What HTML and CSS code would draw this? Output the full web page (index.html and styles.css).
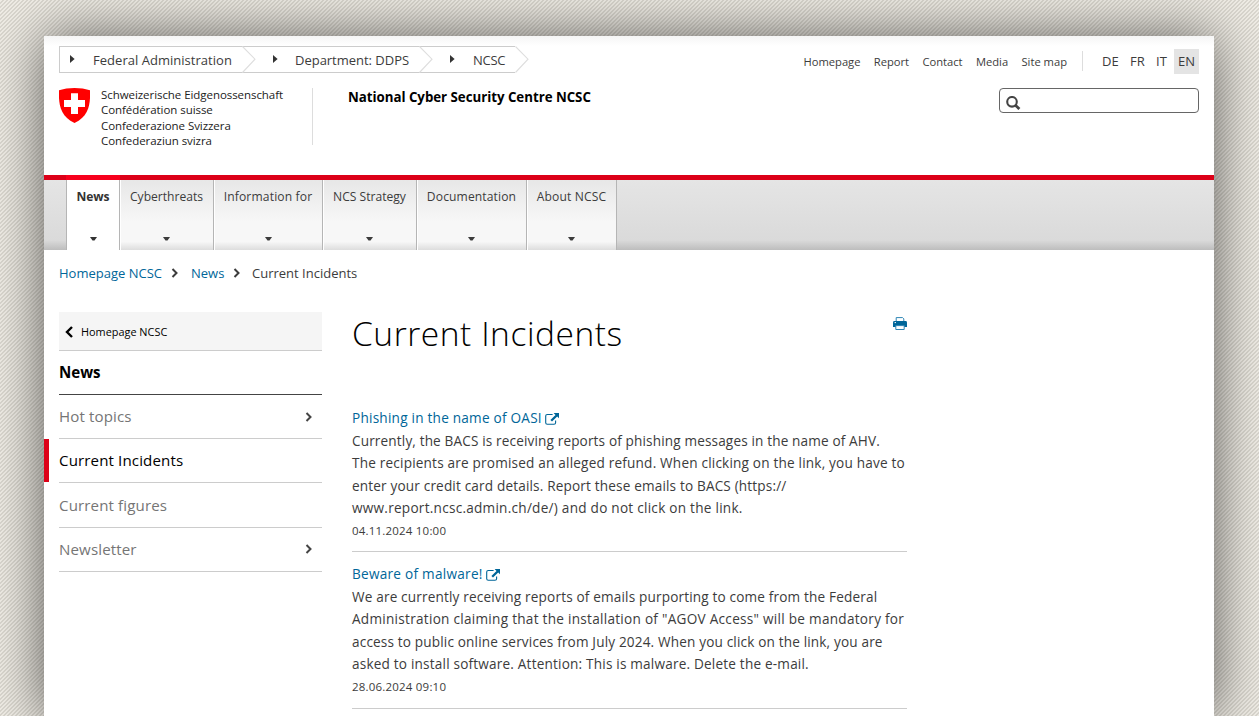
FILE: index.html
```html
<!DOCTYPE html>
<html lang="en">
<head>
<meta charset="utf-8">
<title>Current Incidents</title>
<link rel="stylesheet" href="styles.css">
</head>
<body>
<svg width="0" height="0" class="defs">
  <symbol id="chev" viewBox="0 0 8 10"><path d="M1.5 1 L5.5 5 L1.5 9" fill="none" stroke="currentColor" stroke-width="2"/></symbol>
  <symbol id="tri" viewBox="0 0 5 8"><path d="M0 0 L4.6 4 L0 8Z" fill="currentColor"/></symbol>
  <symbol id="caret" viewBox="0 0 7 4"><path d="M0 0 H7 L4.5 3.6 H2.5Z" fill="currentColor"/></symbol>
  <symbol id="ext" viewBox="0 0 14 12"><path d="M7.6 1.5 H2.3 Q.7 1.5 .7 3 V9.8 Q.7 11.3 2.3 11.3 H9 Q10.6 11.3 10.6 9.8 V7.4" fill="none" stroke="currentColor" stroke-width="1.1"/><path d="M8.6 0 H14 V5.2 L12.2 3.5 L7 8.6 L5.4 7 L10.5 1.9Z" fill="currentColor"/></symbol>
  <symbol id="arrow" viewBox="0 0 14 27"><path d="M.5 .5 L13 13.2 L.5 26.5" fill="#fff" stroke="#dedede" stroke-width="1.1"/></symbol>
</svg>
<div class="page">
  <header class="header">
    <div class="top">
      <ol class="levels">
        <li class="level l1"><svg class="tri"><use href="#tri"/></svg><span>Federal Administration</span><svg class="arrow"><use href="#arrow"/></svg></li>
        <li class="level l2"><svg class="tri"><use href="#tri"/></svg><span>Department: DDPS</span><svg class="arrow"><use href="#arrow"/></svg></li>
        <li class="level l3"><svg class="tri"><use href="#tri"/></svg><span>NCSC</span><svg class="arrow"><use href="#arrow"/></svg></li>
      </ol>
      <nav class="service"><a>Homepage</a><a>Report</a><a>Contact</a><a>Media</a><a>Site map</a></nav>
      <nav class="langs"><a class="g1">DE</a><a class="g2">FR</a><a class="g3">IT</a><a class="on">EN</a></nav>
    </div>
    <div class="brand">
      <div class="logo">
        <svg class="shield" viewBox="0 0 31 35"><path d="M0 2.2 Q7 0 15.5 0 Q24 0 31 2.2 C31.4 14 31 28 15.5 35 C0 28 -.4 14 0 2.2Z" fill="#f00"/><path d="M12 5.2 H19 V12 H26 V19 H19 V26 H12 V19 H5 V12 H12Z" fill="#fff"/></svg>
        <div class="names"><div>Schweizerische Eidgenossenschaft</div><div>Confédération suisse</div><div>Confederazione Svizzera</div><div>Confederaziun svizra</div></div>
      </div>
      <div class="office">National Cyber Security Centre NCSC</div>
      <div class="search"><svg viewBox="0 0 15 14"><circle cx="6" cy="5.8" r="4.8" fill="none" stroke="#444" stroke-width="2.1"/><path d="M9.4 9.2 L13.4 13" stroke="#444" stroke-width="2.8"/></svg></div>
    </div>
  </header>
  <nav class="nav">
    <a class="tab t1 on"><span>News</span><svg><use href="#caret"/></svg></a>
    <a class="tab t2"><span>Cyberthreats</span><svg><use href="#caret"/></svg></a>
    <a class="tab t3"><span>Information for</span><svg><use href="#caret"/></svg></a>
    <a class="tab t4"><span>NCS Strategy</span><svg><use href="#caret"/></svg></a>
    <a class="tab t5"><span>Documentation</span><svg><use href="#caret"/></svg></a>
    <a class="tab t6"><span>About NCSC</span><svg><use href="#caret"/></svg></a>
  </nav>
  <div class="crumbs"><a class="c1">Homepage NCSC</a><svg><use href="#chev"/></svg><a class="c2">News</a><svg><use href="#chev"/></svg><span class="c3">Current Incidents</span></div>
  <div class="main">
    <aside class="side">
      <a class="back"><svg viewBox="0 0 8 12"><path d="M7 1 L2 6 L7 11" fill="none" stroke="#000" stroke-width="2.4"/></svg>Homepage NCSC</a>
      <a class="item head">News</a>
      <a class="item"><span>Hot topics</span><svg><use href="#chev"/></svg></a>
      <a class="item current">Current Incidents</a>
      <a class="item low">Current figures</a>
      <a class="item low"><span>Newsletter</span><svg><use href="#chev"/></svg></a>
    </aside>
    <main class="content">
      <div class="titlebar">
        <h1>Current Incidents</h1>
        <svg class="print" viewBox="0 0 14 13"><path d="M3.2 5 V.6 H9.6 L10.8 1.8 V5" fill="#fff" stroke="#2f86b5" stroke-width="1"/><path d="M1.4 4 H12.6 Q14 4 14 5.4 V10 H0 V5.4 Q0 4 1.4 4Z" fill="#006699"/><path d="M2.8 8.6 H11.2 V12.5 H2.8Z" fill="#fff" stroke="#2f86b5" stroke-width="1"/><path d="M1.6 5.6 H3" stroke="#fff"/></svg>
      </div>
      <article class="news">
        <h2><span class="n1">Phishing in the name of OASI</span><svg><use href="#ext"/></svg></h2>
        <p><span class="a1">Currently, the BACS is receiving reports of phishing messages in the name of AHV.</span><span class="a2">The recipients are promised an alleged refund. When clicking on the link, you have to</span><span class="a3">enter your credit card details. Report these emails to BACS (https://</span><span class="a4">www.report.ncsc.admin.ch/de/) and do not click on the link.</span></p>
        <time>04.11.2024 10:00</time>
      </article>
      <article class="news">
        <h2><span class="n2">Beware of malware!</span><svg><use href="#ext"/></svg></h2>
        <p><span class="b1">We are currently receiving reports of emails purporting to come from the Federal</span><span class="b2">Administration claiming that the installation of "AGOV Access" will be mandatory for</span><span class="b3">access to public online services from July 2024. When you click on the link, you are</span><span class="b4">asked to install software. Attention: This is malware. Delete the e-mail.</span></p>
        <time>28.06.2024 09:10</time>
      </article>
    </main>
  </div>
</div>
</body>
</html>
```

FILE: styles.css
```css
* { box-sizing: border-box; }
html { height: 100%; overflow: hidden; }
body { margin: 0; height: 716px; overflow: hidden; padding: 36px 45px 0 44px; font-family: "Open Sans", "Noto Sans", sans-serif; color: #3c3c3c; background: repeating-linear-gradient(135deg, #efece5 0 1.7px, #d9d6ce 1.7px 2.83px) 0 0 / 4px 4px; }
a { color: inherit; white-space: nowrap; }
h1, h2, p, ol { margin: 0; padding: 0; font-weight: 400; }
.defs { position: absolute; }
.page { height: 680px; background: linear-gradient(#f5f5f5, #fff 10px); box-shadow: 0 0 50px rgba(0, 0, 0, .58), 0 60px 50px rgba(0, 0, 0, .05); }
.header { height: 139px; padding: 10px 15px 0; }
.top { display: flex; height: 27px; }
.levels { display: flex; list-style: none; flex: 1; }
.level { position: relative; display: flex; align-items: center; height: 27px; border: solid #ccc; border-width: 1px 0; background: #fff; font-size: 13px; white-space: nowrap; }
.l1 { width: 183px; border-left-width: 1px; padding-left: 10px; letter-spacing: .03px; }
.l2 { width: 177px; padding-left: 31px; letter-spacing: -.02px; }
.l3 { width: 96px; padding-left: 31px; letter-spacing: -.3px; }
.tri { width: 5px; height: 8px; color: #333; margin-right: 18px; margin-top: -2px; }
.l2 .tri { margin-right: 17px; }
.arrow { position: absolute; z-index: 2; right: -14px; top: -1px; width: 14px; height: 27px; }
.service { display: flex; gap: 13.3px; font-size: 11.2px; line-height: 32px; height: 22px; padding-right: 15px; }
.langs { display: flex; height: 25px; width: 117px; justify-content: flex-end; font-size: 13px; line-height: 25px; margin-top: 3px; position: relative; }
.langs::before { content: ""; width: 1px; height: 20px; background: #ddd; position: absolute; left: 0; top: 2px; }
.g1 { width: 28px; }
.g2 { width: 26px; }
.g3 { width: 18px; }
.langs .on { background: #e4e4e4; width: 25px; padding-left: 4px; }
.brand { display: flex; margin-top: 15px; }
.logo { display: flex; width: 254px; height: 57px; border-right: 1px solid #ddd; }
.shield { width: 31px; height: 35px; margin-right: 11px; }
.names { font-size: 11.5px; line-height: 15.4px; letter-spacing: -.06px; color: #222; margin-top: -1px; white-space: nowrap; }
.office { flex: 1; padding-left: 35px; font-size: 13.3px; letter-spacing: -.03px; font-weight: 700; line-height: 18px; color: #000; }
.search { width: 200px; height: 25px; border: 1px solid #666; border-radius: 4px; background: #fff; }
.search svg { display: block; width: 15px; height: 14px; margin: 7px 0 0 6px; }
.nav { display: flex; height: 75px; padding-left: 22px; border-top: 5px solid #dc0018; background: linear-gradient(#e5e5e5, #dadada 86%, #bdbdbd); }
.tab { display: flex; flex-direction: column; align-items: center; justify-content: space-between; border: solid #b5b5b5; border-width: 0 1px 0 0; box-shadow: inset 1px 0 #fff; padding: 8px 0; font-size: 12.1px; line-height: 17px; background: linear-gradient(#e7e7e7, #f7f7f7 60%, #f7f7f7 88%, #ddd); }
.tab svg { width: 7px; height: 4px; margin-bottom: 1px; }
.tab.on { background: #fff; font-weight: 700; color: #333; border-left-width: 1px; box-shadow: 0 -5px #f7001d; letter-spacing: -.1px; }
.t1 { width: 54px; }
.t2 { width: 94px; }
.t3 { width: 109px; letter-spacing: .15px; }
.t4 { width: 94px; }
.t5 { width: 110px; letter-spacing: .12px; }
.t6 { width: 90px; letter-spacing: .13px; }
.crumbs { display: flex; align-items: center; height: 47px; padding: 0 0 1px 15px; font-size: 13px; white-space: nowrap; }
.crumbs a, .news h2 { color: #006699; }
.crumbs svg { width: 8px; height: 10px; }
.c1 { width: 112px; }
.c2 { width: 42px; margin-left: 12px; }
.c3 { margin-left: 11px; }
.main { display: flex; padding: 15px 15px 0; gap: 30px; }
.side { width: 263px; display: flex; flex-direction: column; }
.back { display: flex; align-items: center; gap: 8px; height: 39px; padding: 1px 6px 0; background: #f5f5f5; border-bottom: 1px solid #ccc; color: #000; font-size: 10.9px; }
.back svg { width: 8px; height: 12px; }
.item { display: flex; align-items: center; justify-content: space-between; height: 44.2px; padding-bottom: 2px; border-bottom: 1px solid #ccc; color: #757575; font-size: 15.1px; letter-spacing: .12px; }
.item svg { width: 8px; height: 10px; margin: 2px 9px 0 0; color: #444; }
.low { padding-bottom: 0; }
.low svg { margin-top: 0; }
.head { height: 44px; color: #000; font-weight: 700; border-color: #444; letter-spacing: 0; }
.current { color: #000; margin-left: -15px; border-left: 5px solid #dc0018; padding-left: 10px; border-bottom: 0; padding-bottom: 3px; position: relative; }
.current::after { content: ""; position: absolute; left: -5px; right: 0; bottom: 0; height: 1px; background: linear-gradient(90deg, #fff 15px, #ccc 15px); }
.content { width: 555px; }
.titlebar { display: flex; justify-content: space-between; height: 95px; }
h1 { font-size: 33.5px; font-weight: 300; line-height: 43px; letter-spacing: .55px; color: #000; }
.print { width: 14px; height: 13px; margin-top: 5px; }
.news { height: 146px; border-bottom: 1px solid #ccc; font-size: 13.6px; line-height: 22.4px; }
.news:first-of-type { height: 145px; margin-bottom: 11px; }
.news h2 { font-size: 13.6px; line-height: 22.4px; height: 23px; display: flex; align-items: center; }
.news h2 svg { width: 14px; height: 12px; margin: 0 0 0 3px; }
.news p span { display: block; white-space: nowrap; }
.news time { display: block; font-size: 11.5px; letter-spacing: .2px; }
.n1 { letter-spacing: .23px; }
.n2 { letter-spacing: .26px; }
.a1 { letter-spacing: .14px; }
.a2 { letter-spacing: .19px; }
.a3 { letter-spacing: .16px; }
.a4 { letter-spacing: .25px; }
.b1 { letter-spacing: .16px; }
.b2 { letter-spacing: .27px; }
.b3 { letter-spacing: .155px; }
.b4 { letter-spacing: .19px; }
```
